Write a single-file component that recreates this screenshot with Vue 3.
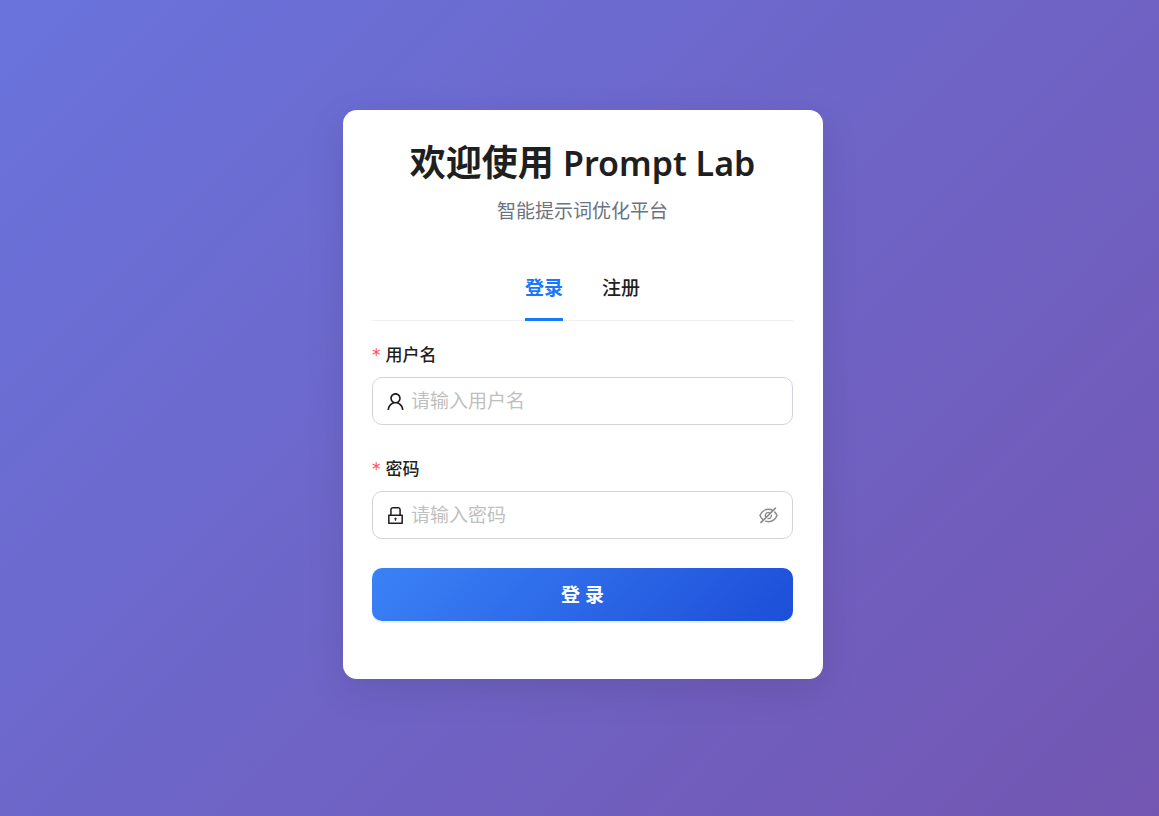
<script setup>
import { ref } from 'vue'

const tabs = [
  { key: 'login', label: '登录' },
  { key: 'register', label: '注册' },
]
const active = ref('login')
const username = ref('')
const password = ref('')
const visible = ref(false)
</script>

<template>
  <main class="page">
    <section class="card">
      <header class="head">
        <h1 class="title">欢迎使用 <span class="brand">Prompt Lab</span></h1>
        <p class="subtitle">智能提示词优化平台</p>
      </header>
      <div class="tabs" role="tablist">
        <button
          v-for="tab in tabs"
          :key="tab.key"
          type="button"
          role="tab"
          class="tab"
          :class="{ active: active === tab.key }"
          :aria-selected="active === tab.key"
          @click="active = tab.key"
        >{{ tab.label }}</button>
      </div>
      <form class="form" @submit.prevent>
        <div class="field">
          <label class="label" for="username"><span class="star">*</span>用户名</label>
          <div class="box">
            <svg class="icon" viewBox="64 64 896 896" fill="currentColor" aria-hidden="true">
              <path d="M858.5 763.6a374 374 0 00-80.6-119.500 375.630 375.630 0 00-119.500-80.600c-.4-.2-.8-.3-1.200-.500C719.500 518 760 444.700 760 362c0-137-111-248-248-248S264 225 264 362c0 82.700 40.500 156 102.800 201.100-.4.200-.8.300-1.200.500-44.800 18.900-85 46-119.500 80.600a375.630 375.630 0 00-80.600 119.500A371.700 371.700 0 00136 901.800a8 8 0 008 8.200h60c4.400 0 7.900-3.500 8-7.800 2-77.200 33-149.500 87.800-204.300 56.700-56.700 132-87.900 212.200-87.900s155.500 31.200 212.200 87.900C779 752.700 810 825 812 902.200c.1 4.400 3.600 7.800 8 7.800h60a8 8 0 008-8.200c-1-47.800-10.900-94.300-29.500-138.200zM512 534c-45.900 0-89.100-17.900-121.600-50.400S340 407.900 340 362c0-45.900 17.900-89.100 50.400-121.600S466.100 190 512 190s89.100 17.900 121.600 50.400S684 316.100 684 362c0 45.900-17.900 89.100-50.400 121.600S557.900 534 512 534z" />
            </svg>
            <input id="username" v-model="username" class="input" type="text" placeholder="请输入用户名" autocomplete="username" />
          </div>
        </div>
        <div class="field">
          <label class="label" for="password"><span class="star">*</span>密码</label>
          <div class="box">
            <svg class="icon" viewBox="64 64 896 896" fill="currentColor" aria-hidden="true">
              <path d="M832 464h-68V240c0-70.700-57.300-128-128-128H388c-70.700 0-128 57.300-128 128v224h-68c-17.700 0-32 14.300-32 32v384c0 17.700 14.300 32 32 32h640c17.700 0 32-14.300 32-32V496c0-17.700-14.300-32-32-32zM332 240c0-30.900 25.100-56 56-56h248c30.900 0 56 25.100 56 56v224H332V240zm460 600H232V536h560v304zM484 701v53c0 4.400 3.600 8 8 8h40c4.400 0 8-3.600 8-8v-53a48.010 48.010 0 10-56 0z" />
            </svg>
            <input id="password" v-model="password" class="input" :type="visible ? 'text' : 'password'" placeholder="请输入密码" autocomplete="current-password" />
            <button type="button" class="eye" aria-label="显示密码" @click="visible = !visible">
              <svg class="icon" viewBox="64 64 896 896" fill="currentColor" aria-hidden="true">
                <path d="M942.200 486.200Q889.470 375.110 816.700 305l-50.880 50.880C807.310 395.530 843.450 447.400 874.700 512 791.500 684.200 673.400 766 512 766q-72.670 0-133.870-22.380L323 798.750Q408 838 512 838q288.300 0 430.200-300.300a60.290 60.290 0 000-51.500zm-63.570-320.640L836 122.880a8 8 0 00-11.320 0L715.310 232.200Q624.860 186 512 186q-288.300 0-430.200 300.300a60.300 60.300 0 000 51.500q56.690 119.400 136.500 191.410L112.480 835a8 8 0 000 11.310L155.170 889a8 8 0 0011.310 0l712.150-712.120a8 8 0 000-11.320zM149.300 512C232.600 339.800 350.700 258 512 258c54.540 0 104.130 9.360 149.120 28.390l-70.300 70.300a176 176 0 00-238.130 238.130l-83.420 83.420C223.100 637.490 183.300 582.280 149.300 512zm246.700 0a112.110 112.110 0 01146.200-106.690L401.310 546.200A112 112 0 01396 512z" />
                <path d="M508 624c-3.460 0-6.870-.16-10.250-.47l-52.820 52.820a176.090 176.090 0 00227.420-227.420l-52.820 52.820c.31 3.380.47 6.790.47 10.250a111.940 111.940 0 01-112 112z" />
              </svg>
            </button>
          </div>
        </div>
        <button type="submit" class="submit">登 录</button>
      </form>
    </section>
  </main>
</template>

<style>
body {
  margin: 0;
}
</style>

<style scoped>
.page {
  box-sizing: border-box;
  min-height: 100vh;
  display: flex;
  align-items: center;
  justify-content: center;
  padding: 0 0 27px 7px;
  background: linear-gradient(135deg, #6973dc 0%, #7356b2 100%);
  font-family: "Noto Sans", "Noto Sans CJK SC", sans-serif;
  color: #1f1f1f;
}
.card {
  box-sizing: border-box;
  width: 100%;
  max-width: 480px;
  padding: 29px 30px 58px 29px;
  border-radius: 14px;
  background: #fff;
  box-shadow: 0 10px 38px rgba(0, 0, 0, 0.1);
}
.head {
  text-align: center;
}
.title {
  margin: 0 0 9px;
  font-size: 36px;
  line-height: 48px;
  font-weight: 600;
}
.brand {
  font-size: 34px;
}
.subtitle {
  margin: 0;
  font-size: 19px;
  line-height: 30px;
  color: #6b7280;
}
.tabs {
  display: flex;
  justify-content: center;
  gap: 39px;
  margin-top: 33px;
  box-shadow: inset 0 -1px #f0f0f0;
}
.tab {
  padding: 14px 0 15px;
  border: 0;
  border-bottom: 3px solid transparent;
  background: none;
  font: 500 19px/30px "Noto Sans", "Noto Sans CJK SC", sans-serif;
  color: #1f1f1f;
  cursor: pointer;
}
.tab.active {
  border-bottom-color: #1677ff;
  color: #1677ff;
  font-weight: 600;
}
.form {
  margin-top: 19px;
}
.field {
  margin-bottom: 29px;
}
.label {
  display: flex;
  align-items: center;
  gap: 5px;
  height: 26px;
  margin-bottom: 11px;
  font-size: 17px;
  font-weight: 500;
}
.star {
  padding-top: 5px;
  color: #ff4d4f;
  font: 17px/1 "DejaVu Sans", sans-serif;
}
.box {
  box-sizing: border-box;
  display: flex;
  align-items: center;
  gap: 6px;
  height: 48px;
  padding: 0 14px 0 13px;
  border: 1px solid #d1d5db;
  border-radius: 10px;
  background: #fff;
}
.icon {
  display: block;
  flex: none;
  width: 19px;
  height: 19px;
}
.input {
  flex: 1;
  min-width: 0;
  padding: 0;
  border: 0;
  outline: 0;
  background: none;
  font: 19px/30px "Noto Sans", "Noto Sans CJK SC", sans-serif;
  color: #1f1f1f;
}
.input::placeholder {
  color: #bfbfbf;
}
.eye {
  padding: 0;
  border: 0;
  background: none;
  color: #8c8c8c;
  cursor: pointer;
}
.submit {
  display: block;
  width: 100%;
  height: 53px;
  border: 0;
  border-radius: 10px;
  background: linear-gradient(135deg, #3b82f6 0%, #1d4ed8 100%);
  box-shadow: 0 2px 0 rgba(5, 145, 255, 0.1);
  color: #fff;
  font: 600 19px/30px "Noto Sans", "Noto Sans CJK SC", sans-serif;
  cursor: pointer;
}
</style>
